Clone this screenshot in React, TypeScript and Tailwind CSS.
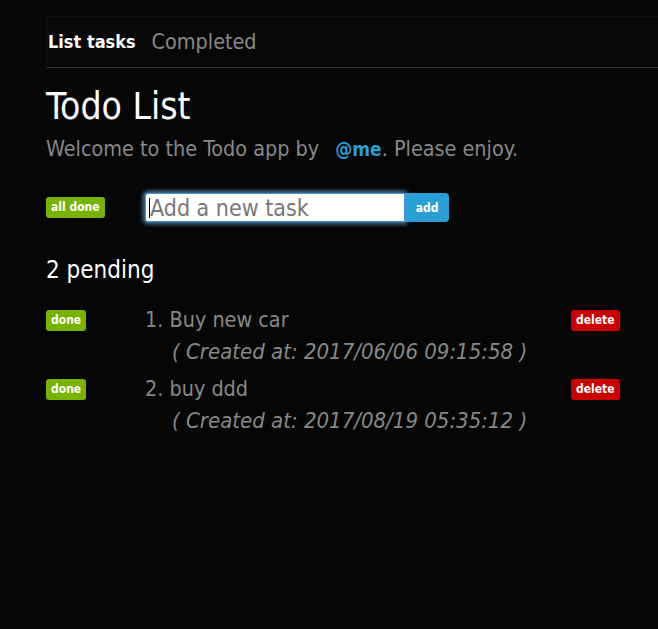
const tasks = [
  { id: 1, title: "Buy new car", created: "2017/06/06 09:15:58" },
  { id: 2, title: "buy ddd", created: "2017/08/19 05:35:12" },
];

const App: React.FC = () => {
  return (
    <div className="min-h-[629px] bg-[#060606] pl-[46px] pt-[16px] font-['DejaVu_Sans_Condensed','DejaVu_Sans',sans-serif] [font-stretch:condensed] text-[21.4px] leading-[30px] text-[#888888]">
      {/* nav */}
      <div className="flex gap-[16px] rounded-tl-[4px] border-t border-l border-b border-t-[#111111] border-l-[#111111] border-b-[#333333] bg-[#070707] px-[1px] py-[10px]">
        <span className="text-white font-bold text-[18px]">List tasks</span>
        <span className="text-[#888888]">Completed</span>
      </div>

      <h1 className="mt-[19px] text-[37px] leading-[40px] text-white">Todo List</h1>
      <p className="mt-[7px]">
        Welcome to the Todo app by{" "}
        <a className="ml-[10px] font-bold text-[19px] text-[#2a9fd6]">@me</a>. Please enjoy.
      </p>

      {/* add row */}
      <div className="mt-[29px] flex items-center">
        <div className="flex w-[99px]">
          <button className="rounded-[3px] bg-[#77b300] px-[5px] text-[12px] leading-[21px] font-bold text-white">
            all done
          </button>
        </div>
        <div className="relative flex">
          <input
            placeholder="Add a new task"
            className="h-[29px] w-[260px] rounded-l-[3px] border border-[#4d90d8] bg-white px-[4px] text-[23px] text-black shadow-[0_0_4px_2px_rgba(102,175,233,0.7)] outline-none placeholder:text-[#777777]"
          />
          <span className="absolute left-[4px] top-[5px] h-[20px] w-[1px] bg-black" />
          <button className="h-[29px] w-[44px] rounded-r-[4px] bg-[#2a9fd6] text-[12px] font-bold text-white">
            add
          </button>
        </div>
      </div>

      <h3 className="mt-[33px] text-[24px] leading-[30px] text-white">2 pending</h3>

      <div className="mt-[20px]">
        {tasks.map((t, i) => (
          <div key={t.id} className="mb-[7px] flex items-start">
            <div className="flex w-[99px] mt-[5px]">
              <button className="rounded-[3px] bg-[#77b300] px-[5px] text-[12px] leading-[21px] font-bold text-white">
                done
              </button>
            </div>
            <div className="w-[426px]">
              <div>
                {i + 1}. {t.title}
              </div>
              <div className="mt-[2px] pl-[27px] text-[22px] italic">( Created at: {t.created} )</div>
            </div>
            <div className="flex mt-[5px]">
              <button className="rounded-[3px] bg-[#cc0000] px-[5px] text-[12px] leading-[21px] font-bold text-white">
                delete
              </button>
            </div>
          </div>
        ))}
      </div>
    </div>
  );
};

export default App;
